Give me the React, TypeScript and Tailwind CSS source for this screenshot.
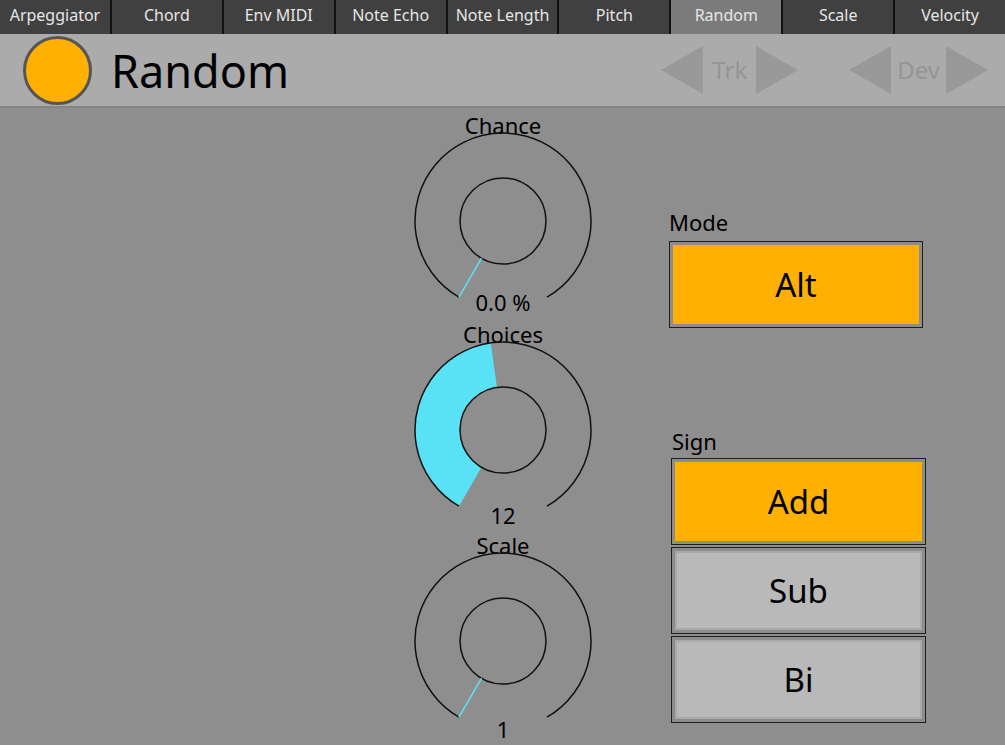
import React from 'react';

const FONT = { fontFamily: '"Noto Sans", "Open Sans", sans-serif' };

const tabs = ['Arpeggiator', 'Chord', 'Env MIDI', 'Note Echo', 'Note Length', 'Pitch', 'Random', 'Scale', 'Velocity'];

const pt = (cx: number, cy: number, r: number, deg: number) => {
  const a = (deg * Math.PI) / 180;
  return [cx + r * Math.sin(a), cy - r * Math.cos(a)];
};

const Knob: React.FC<{ label: string; value: string; fillTo?: number; mark?: number; valueClass: string }> = ({ label, value, fillTo, mark, valueClass }) => {
  const cx = 90, cy = 90, R = 88, r = 43;
  const [sx, sy] = pt(cx, cy, R, -150);
  const [ex, ey] = pt(cx, cy, R, 150);
  let fill = '';
  if (fillTo !== undefined) {
    const [ox, oy] = pt(cx, cy, R, fillTo);
    const [ix, iy] = pt(cx, cy, r, fillTo);
    const [isx, isy] = pt(cx, cy, r, -150);
    const large = fillTo + 150 > 180 ? 1 : 0;
    fill = `M${sx} ${sy} A${R} ${R} 0 ${large} 1 ${ox} ${oy} L${ix} ${iy} A${r} ${r} 0 ${large} 0 ${isx} ${isy} Z`;
  }
  const m = mark ?? -150;
  const [m1x, m1y] = pt(cx, cy, r, m);
  const [m2x, m2y] = pt(cx, cy, R, m);
  return (
    <div className="flex flex-col items-center">
      <div className="text-[22px] leading-[24px] text-black">{label}</div>
      <svg width="180" height="180" className="-mt-[6px]">
        {fill && <path d={fill} fill="#59e1f6" />}
        <path d={`M${sx} ${sy} A${R} ${R} 0 1 1 ${ex} ${ey}`} fill="none" stroke="#111" strokeWidth="1.5" />
        <circle cx={cx} cy={cy} r={r} fill="none" stroke="#111" strokeWidth="1.5" />
        {fillTo === undefined && <line x1={m1x} y1={m1y} x2={m2x} y2={m2y} stroke="#5ee3f7" strokeWidth="1.5" />}
      </svg>
      <div className={`text-[22px] leading-[24px] text-black ${valueClass}`}>{value}</div>
    </div>
  );
};

const Btn: React.FC<{ label: string; on?: boolean }> = ({ label, on }) => (
  <div className="h-[87px] border border-[#1e1e1e] bg-[#8c8c8c] p-[3px]">
    <div className={`flex h-full items-center justify-center text-[33px] text-black ${on ? 'bg-[#ffb000]' : 'bg-[#b9b9b9] border-2 border-[#a9a9a9]'}`}>
      {label}
    </div>
  </div>
);

const Tri: React.FC<{ left?: boolean }> = ({ left }) => (
  <svg width="42" height="48" viewBox="0 0 42 48">
    <polygon points={left ? '0,24 42,0 42,48' : '0,0 42,24 0,48'} fill="#999999" />
  </svg>
);

export default function App() {
  return (
    <div className="flex h-[745px] w-[1005px] flex-col overflow-hidden bg-[#8e8e8e]" style={FONT}>
      <div className="flex h-[34px] bg-[#404040]">
        {tabs.map((t, i) => (
          <div
            key={t}
            className={`flex flex-1 items-center justify-center pb-[5px] text-[16px] leading-none text-[#e6e6e6] ${i < tabs.length - 1 ? 'border-r-2 border-[#111]' : ''} ${t === 'Random' ? 'bg-[#7b7b7b]' : ''}`}
          >
            {t}
          </div>
        ))}
      </div>

      <div className="flex h-[74px] items-center border-b-2 border-[#858585] bg-[#ababab]">
        <div className="ml-[23px] h-[69px] w-[69px] rounded-full border-[3px] border-[#555] bg-[#ffb000]" />
        <div className="ml-[19px] text-[45px] leading-none text-black">Random</div>
        <div className="ml-auto flex items-center">
          <Tri left />
          <span className="mx-[9px] text-[24px] text-[#959595]">Trk</span>
          <Tri />
          <div className="w-[51px]" />
          <Tri left />
          <span className="mx-[6px] text-[24px] text-[#959595]">Dev</span>
          <Tri />
          <div className="w-[17px]" />
        </div>
      </div>

      <div className="flex flex-1">
        <div className="w-[413px]" />
        <div className="flex w-[180px] flex-col pt-[5px]">
          <Knob label="Chance" value="0.0 %" valueClass="-mt-[21px]" />
          <div className="h-[8px]" />
          <Knob label="Choices" value="12" fillTo={-8} valueClass="-mt-[17px]" />
          <div className="h-[6px]" />
          <Knob label="Scale" value="1" valueClass="-mt-[14px]" />
        </div>
        <div className="w-[76px]" />
        <div className="flex w-[257px] flex-col pt-[101px]">
          <div className="text-[22px] leading-[26px] text-black">Mode</div>
          <div className="mt-[6px] w-[254px]">
            <Btn label="Alt" on />
          </div>
          <div className="ml-[3px] mt-[100px] text-[22px] leading-[26px] text-black">Sign</div>
          <div className="ml-[2px] mt-[4px] flex flex-col gap-[2px]">
            <Btn label="Add" on />
            <Btn label="Sub" />
            <Btn label="Bi" />
          </div>
        </div>
      </div>
    </div>
  );
}
